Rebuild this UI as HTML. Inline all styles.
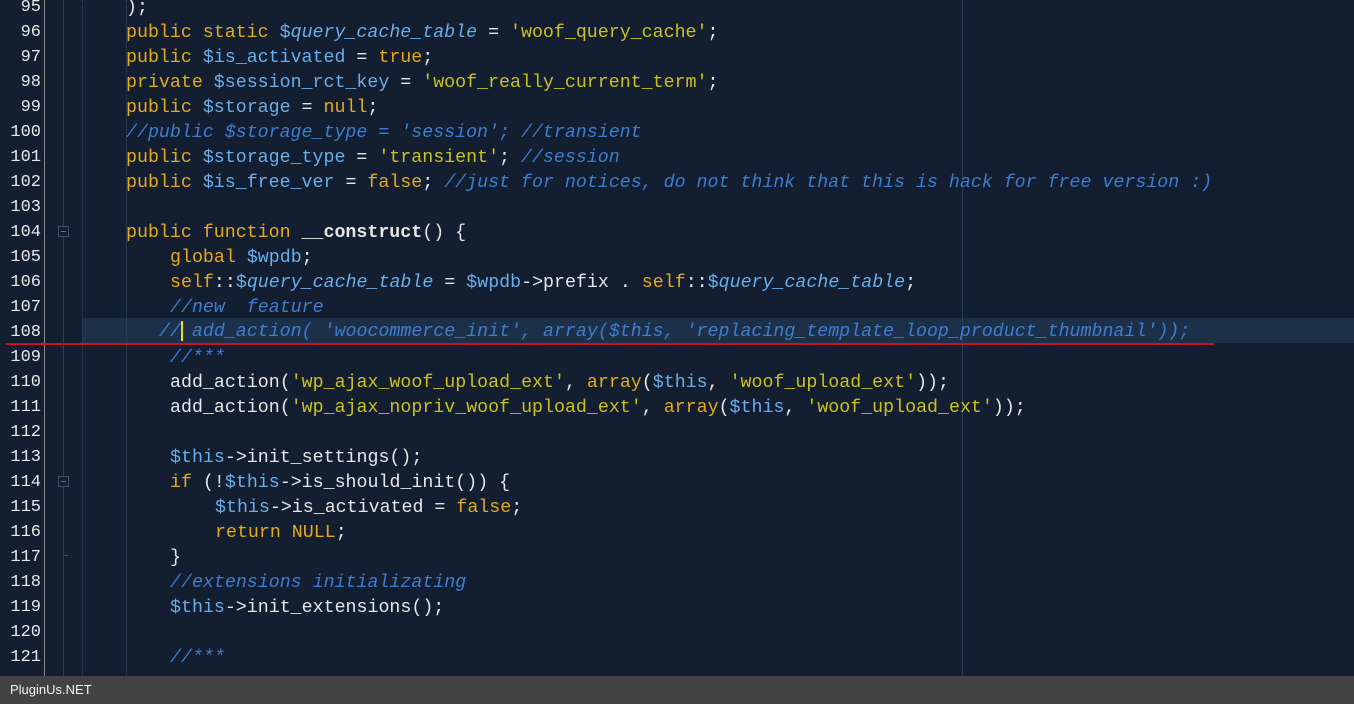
<!DOCTYPE html>
<html><head><style>
body{margin:0;width:1354px;height:704px;overflow:hidden;background:#131e31;position:relative;font-family:"Liberation Mono",monospace}
.ln{position:absolute;left:0;width:41px;text-align:right;font-size:17px;color:#e8e8e8;height:25px;line-height:25px}
.c{position:absolute;font-size:18.3px;color:#e6e6e6;white-space:pre;height:25px;line-height:25px;margin-top:1px}
.k{color:#e3aa1e}.v{color:#6aaee8}.s{color:#c9c21e}.m{color:#3d7dd0;font-style:italic}.i{font-style:italic}
.vl{position:absolute;top:0;height:676px}
</style></head><body>
<div style="position:absolute;left:82px;top:318px;width:1272px;height:25px;background:#1d3049"></div>
<div class="vl" style="left:44px;width:1px;background:#8a8a8a"></div>
<div class="vl" style="left:63px;width:1px;background:#2c3e58"></div>
<div class="vl" style="left:82px;border-left:1px dotted #2f4866"></div>
<div class="vl" style="left:126px;border-left:1px dotted #2f4866"></div>
<div class="vl" style="left:962px;width:1px;background:#2a3c58"></div>
<div style="position:absolute;left:58px;top:226px;width:9px;height:9px;border:1px solid #3b506c;background:#131e31"><div style="margin:4px 2px 0;height:1px;background:#5c7090"></div></div>
<div style="position:absolute;left:58px;top:476px;width:9px;height:9px;border:1px solid #3b506c;background:#131e31"><div style="margin:4px 2px 0;height:1px;background:#5c7090"></div></div>
<div style="position:absolute;left:63px;top:555px;width:5px;height:1px;background:#3b506c"></div>

<div class="ln" style="top:-5px">95</div><div class="c" style="top:-5px;left:126px">);</div>
<div class="ln" style="top:20px">96</div><div class="c" style="top:20px;left:126px"><span class="k">public static</span> <span class="v">$<i>query_cache_table</i></span> = <span class="s">'woof_query_cache'</span>;</div>
<div class="ln" style="top:45px">97</div><div class="c" style="top:45px;left:126px"><span class="k">public</span> <span class="v">$is_activated</span> = <span class="k">true</span>;</div>
<div class="ln" style="top:70px">98</div><div class="c" style="top:70px;left:126px"><span class="k">private</span> <span class="v">$session_rct_key</span> = <span class="s">'woof_really_current_term'</span>;</div>
<div class="ln" style="top:95px">99</div><div class="c" style="top:95px;left:126px"><span class="k">public</span> <span class="v">$storage</span> = <span class="k">null</span>;</div>
<div class="ln" style="top:120px">100</div><div class="c m" style="top:120px;left:126px">//public $storage_type = 'session'; //transient</div>
<div class="ln" style="top:145px">101</div><div class="c" style="top:145px;left:126px"><span class="k">public</span> <span class="v">$storage_type</span> = <span class="s">'transient'</span>; <span class="m">//session</span></div>
<div class="ln" style="top:170px">102</div><div class="c" style="top:170px;left:126px"><span class="k">public</span> <span class="v">$is_free_ver</span> = <span class="k">false</span>; <span class="m">//just for notices, do not think that this is hack for free version :)</span></div>
<div class="ln" style="top:195px">103</div>
<div class="ln" style="top:220px">104</div><div class="c" style="top:220px;left:126px"><span class="k">public function</span> <b>__construct</b>() {</div>
<div class="ln" style="top:245px">105</div><div class="c" style="top:245px;left:170px"><span class="k">global</span> <span class="v">$wpdb</span>;</div>
<div class="ln" style="top:270px">106</div><div class="c" style="top:270px;left:170px"><span class="k">self</span>::<span class="v">$<i>query_cache_table</i></span> = <span class="v">$wpdb</span>-&gt;prefix . <span class="k">self</span>::<span class="v">$<i>query_cache_table</i></span>;</div>
<div class="ln" style="top:295px">107</div><div class="c m" style="top:295px;left:170px">//new  feature</div>
<div class="ln" style="top:320px">108</div><div class="c m" style="top:319px;left:159px">// add_action( 'woocommerce_init', array($this, 'replacing_template_loop_product_thumbnail'));</div>
<div style="position:absolute;left:181px;top:321px;width:2px;height:20px;background:#f0e000"></div>
<div style="position:absolute;left:6px;top:343px;width:1208px;height:2px;background:#c8141a"></div>
<div class="ln" style="top:345px">109</div><div class="c m" style="top:345px;left:170px">//***</div>
<div class="ln" style="top:370px">110</div><div class="c" style="top:370px;left:170px">add_action(<span class="s">'wp_ajax_woof_upload_ext'</span>, <span class="k">array</span>(<span class="v">$this</span>, <span class="s">'woof_upload_ext'</span>));</div>
<div class="ln" style="top:395px">111</div><div class="c" style="top:395px;left:170px">add_action(<span class="s">'wp_ajax_nopriv_woof_upload_ext'</span>, <span class="k">array</span>(<span class="v">$this</span>, <span class="s">'woof_upload_ext'</span>));</div>
<div class="ln" style="top:420px">112</div>
<div class="ln" style="top:445px">113</div><div class="c" style="top:445px;left:170px"><span class="v">$this</span>-&gt;init_settings();</div>
<div class="ln" style="top:470px">114</div><div class="c" style="top:470px;left:170px"><span class="k">if</span> (!<span class="v">$this</span>-&gt;is_should_init()) {</div>
<div class="ln" style="top:495px">115</div><div class="c" style="top:495px;left:215px"><span class="v">$this</span>-&gt;is_activated = <span class="k">false</span>;</div>
<div class="ln" style="top:520px">116</div><div class="c" style="top:520px;left:215px"><span class="k">return NULL</span>;</div>
<div class="ln" style="top:545px">117</div><div class="c" style="top:545px;left:170px">}</div>
<div class="ln" style="top:570px">118</div><div class="c m" style="top:570px;left:170px">//extensions initializating</div>
<div class="ln" style="top:595px">119</div><div class="c" style="top:595px;left:170px"><span class="v">$this</span>-&gt;init_extensions();</div>
<div class="ln" style="top:620px">120</div>
<div class="ln" style="top:645px">121</div><div class="c m" style="top:645px;left:170px">//***</div>
<div style="position:absolute;left:0;top:676px;width:1354px;height:28px;background:#434343;color:#f2f2f2;font:13px/28px 'Liberation Sans',sans-serif;padding-left:10px">PluginUs.NET</div>
</body></html>
